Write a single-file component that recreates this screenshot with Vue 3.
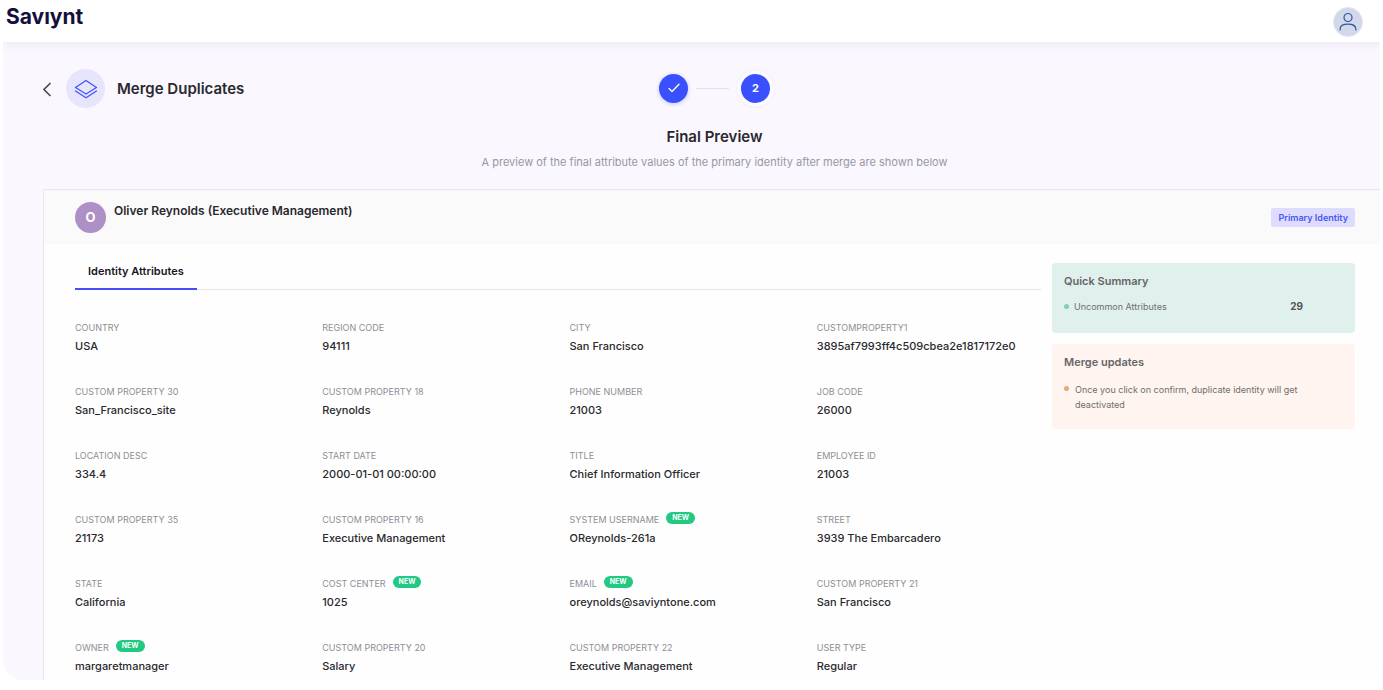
<script setup>
const attributes = [
  { label: 'COUNTRY', value: 'USA' },
  { label: 'REGION CODE', value: '94111' },
  { label: 'CITY', value: 'San Francisco' },
  { label: 'CUSTOMPROPERTY1', value: '3895af7993ff4c509cbea2e1817172e0' },
  { label: 'CUSTOM PROPERTY 30', value: 'San_Francisco_site' },
  { label: 'CUSTOM PROPERTY 18', value: 'Reynolds' },
  { label: 'PHONE NUMBER', value: '21003' },
  { label: 'JOB CODE', value: '26000' },
  { label: 'LOCATION DESC', value: '334.4' },
  { label: 'START DATE', value: '2000-01-01 00:00:00' },
  { label: 'TITLE', value: 'Chief Information Officer' },
  { label: 'EMPLOYEE ID', value: '21003' },
  { label: 'CUSTOM PROPERTY 35', value: '21173' },
  { label: 'CUSTOM PROPERTY 16', value: 'Executive Management' },
  { label: 'SYSTEM USERNAME', value: 'OReynolds-261a', isNew: true },
  { label: 'STREET', value: '3939 The Embarcadero' },
  { label: 'STATE', value: 'California' },
  { label: 'COST CENTER', value: '1025', isNew: true },
  { label: 'EMAIL', value: 'oreynolds@saviyntone.com', isNew: true },
  { label: 'CUSTOM PROPERTY 21', value: 'San Francisco' },
  { label: 'OWNER', value: 'margaretmanager', isNew: true },
  { label: 'CUSTOM PROPERTY 20', value: 'Salary' },
  { label: 'CUSTOM PROPERTY 22', value: 'Executive Management' },
  { label: 'USER TYPE', value: 'Regular' }
]
</script>

<template>
  <div class="frame">
    <header class="topbar">
      <a class="logo" href="#">Savıynt</a>
      <button class="user" type="button" aria-label="Account">
        <svg width="18" height="20" viewBox="0 0 18 20" fill="none" stroke="#34549f" stroke-width="1.2" stroke-linecap="round">
          <circle cx="9" cy="5.5" r="4" />
          <path d="M1.2 18v-1.2c0-3 3.4-4.6 7.8-4.6s7.8 1.6 7.8 4.6V18" />
        </svg>
      </button>
    </header>

    <main class="page">
      <div class="heading">
        <div class="heading-title">
          <button class="back" type="button" aria-label="Back">
            <svg width="10" height="16" viewBox="0 0 10 16" fill="none" stroke="#4a4a50" stroke-width="1.6">
              <path d="M7.500 2 1 8.500 7.500 15" />
            </svg>
          </button>
          <span class="layers">
            <svg width="24" height="20" viewBox="0 0 24 20" fill="none" stroke="#4453fb" stroke-width="1.3" stroke-linejoin="round" stroke-linecap="round">
              <path d="M12 1.500 22.500 8.500 12 15 1.500 8.500z" />
              <path d="M1.500 12 12 18.800 22.500 12" />
            </svg>
          </span>
          <h1>Merge Duplicates</h1>
        </div>
        <ol class="steps">
          <li class="step" aria-label="Step 1, complete">
            <svg width="12" height="10" viewBox="0 0 12 10" fill="none" stroke="#fff" stroke-width="1.3" stroke-linecap="round" stroke-linejoin="round">
              <path d="M1 5.500 4 8.500 11 1.200" />
            </svg>
          </li>
          <li class="step-line" aria-hidden="true"></li>
          <li class="step current" aria-current="step">2</li>
        </ol>
      </div>

      <h2>Final Preview</h2>
      <p class="subtitle">A preview of the final attribute values of the primary identity after merge are shown below</p>

      <section class="card">
        <div class="identity">
          <span class="initial">O</span>
          <h3>Oliver Reynolds (Executive Management)</h3>
          <span class="tag">Primary Identity</span>
        </div>
        <div class="body">
          <div class="details">
            <div class="tabs" role="tablist">
              <button class="tab" type="button" role="tab" aria-selected="true">Identity Attributes</button>
            </div>
            <dl class="attributes">
              <div v-for="item in attributes" :key="item.label" class="attribute">
                <dt>{{ item.label }}<span v-if="item.isNew" class="new">NEW</span></dt>
                <dd>{{ item.value }}</dd>
              </div>
            </dl>
          </div>
          <aside class="side">
            <section class="panel summary">
              <h4>Quick Summary</h4>
              <div class="summary-row">
                <span class="dot"></span>
                <span class="summary-name">Uncommon Attributes</span>
                <strong>29</strong>
              </div>
            </section>
            <section class="panel updates">
              <h4>Merge updates</h4>
              <div class="update-row">
                <span class="dot"></span>
                <p>Once you click on confirm, duplicate identity will get deactivated</p>
              </div>
            </section>
          </aside>
        </div>
      </section>
    </main>
  </div>
</template>

<style>
body {
  background: #fff;
}
</style>

<style scoped>
.frame {
  display: flex;
  flex-direction: column;
  min-height: calc(100vh - 10px);
  margin: 0 3px;
  overflow: hidden;
  border-radius: 0 0 20px 20px;
  background: #faf7ff;
  color: #29292e;
  font-family: Inter, Roboto, sans-serif;
}
h1, h2, h3, h4, p, dl, dd, ol {
  margin: 0;
  padding: 0;
}
button {
  border: 0;
  padding: 0;
  font-family: inherit;
  cursor: pointer;
}
.topbar {
  display: flex;
  align-items: flex-start;
  justify-content: space-between;
  height: 42px;
  box-sizing: border-box;
  padding: 4px 17px 0 3px;
  background: #fff;
  box-shadow: 0 2px 10px rgba(50, 40, 90, 0.08);
}
.logo {
  color: #140f3d;
  font: 700 21px/26px Inter, sans-serif;
  text-decoration: none;
}
.user {
  display: flex;
  align-items: center;
  justify-content: center;
  width: 30px;
  height: 30px;
  margin-top: 3px;
  border: 1px solid #e4e6f0;
  border-radius: 50%;
  background: #d0d8ea;
}
.page {
  display: flex;
  flex: 1;
  flex-direction: column;
  margin-right: -6px;
  padding: 27px 0 0 40px;
}
.heading {
  display: grid;
  grid-template-columns: 1fr auto 1fr;
  align-items: center;
}
.heading-title {
  display: flex;
  align-items: center;
}
.back {
  display: flex;
  width: 10px;
  margin-right: 13px;
  background: none;
}
.layers {
  display: flex;
  align-items: center;
  justify-content: center;
  width: 39px;
  height: 39px;
  margin-right: 12px;
  border-radius: 50%;
  background: #e6e5fc;
}
h1,
h2 {
  font-size: 15px;
  font-weight: 600;
  line-height: 24px;
}
.steps {
  display: flex;
  align-items: center;
  padding-bottom: 1px;
  list-style: none;
}
.step {
  display: flex;
  align-items: center;
  justify-content: center;
  width: 29px;
  height: 29px;
  border-radius: 50%;
  background: #3a50fd;
  box-shadow: 0 1px 4px rgba(58, 80, 253, 0.3);
  color: #fff;
  font-size: 11px;
  font-weight: 700;
}
.current {
  box-shadow: 0 0 0 4px #fbfaff, 0 0 0 5px #f2f0f9;
}
.step-line {
  width: 33px;
  height: 1px;
  margin: 0 12px 0 8px;
  background: #e2e0ea;
}
h2 {
  margin-top: 17px;
  text-align: center;
}
.subtitle {
  margin-top: 5px;
  color: #98979f;
  font-size: 11px;
  line-height: 16px;
  text-align: center;
}
.card {
  flex: 1;
  margin-top: 19px;
  border: 1px solid #e8e7ec;
  border-bottom: 0;
  background: #fefefe;
}
.identity {
  display: flex;
  align-items: center;
  height: 54px;
  padding: 0 30px 0 31px;
  background: #fafafa;
}
.initial {
  display: flex;
  align-items: center;
  justify-content: center;
  width: 31px;
  height: 31px;
  margin-right: 8px;
  border-radius: 50%;
  background: #ae8fc6;
  color: #fff;
  font-size: 13px;
  font-weight: 700;
}
h3 {
  flex: 1;
  padding-bottom: 12px;
  font-size: 12px;
  font-weight: 600;
  line-height: 18px;
}
.tag {
  padding: 2px 7px;
  border-radius: 2px;
  background: #dddcfe;
  color: #4a55f7;
  font-size: 9px;
  font-weight: 600;
  line-height: 15px;
}
.body {
  display: flex;
  gap: 11px;
  padding: 0 30px 0 31px;
}
.details {
  flex: 1;
}
.tabs {
  display: flex;
  height: 46px;
  box-sizing: border-box;
  border-bottom: 1px solid #e6e6ea;
}
.tab {
  height: 46px;
  padding: 10px 13px 0;
  border-bottom: 2px solid #4a4df5;
  background: none;
  color: #17171b;
  font-size: 11px;
  font-weight: 600;
  line-height: 16px;
}
.attributes {
  display: grid;
  grid-template-columns: repeat(4, 1fr);
  gap: 28px 23px;
  padding: 30px 0 0;
}
.attribute {
  min-width: 0;
}
dt {
  display: flex;
  gap: 7px;
  color: #8e8e94;
  font-size: 9px;
  line-height: 16px;
}
dd {
  font-size: 11px;
  font-weight: 500;
  line-height: 20px;
}
.new {
  align-self: flex-start;
  padding: 0 6px;
  border-radius: 6px;
  background: #22c983;
  color: #fff;
  font-size: 7px;
  font-weight: 700;
  line-height: 12px;
}
.side {
  display: flex;
  flex-direction: column;
  gap: 11px;
  width: 303px;
  margin-top: 19px;
}
.panel {
  box-sizing: border-box;
  padding: 9px 12px 17px;
  border-radius: 4px;
  color: #6e6e70;
}
.summary {
  background: #e0f0ed;
}
.updates {
  background: #fff4ef;
}
h4 {
  color: #666668;
  font-size: 11px;
  font-weight: 600;
  line-height: 18px;
}
.summary-row,
.update-row {
  display: flex;
  font-size: 9px;
  line-height: 15px;
}
.summary-row {
  align-items: center;
  margin-top: 9px;
  padding: 0 40px 2px 0;
}
.summary-name {
  flex: 1;
}
.summary-row strong {
  color: #555558;
  font-size: 10px;
}
.update-row {
  margin-top: 11px;
  padding-right: 32px;
}
.dot {
  flex: none;
  width: 5px;
  height: 5px;
  margin-right: 5px;
  border-radius: 50%;
  background: #82cdb3;
}
.update-row .dot {
  margin: 4px 6px 0 0;
  background: #e0ae7c;
}
</style>
